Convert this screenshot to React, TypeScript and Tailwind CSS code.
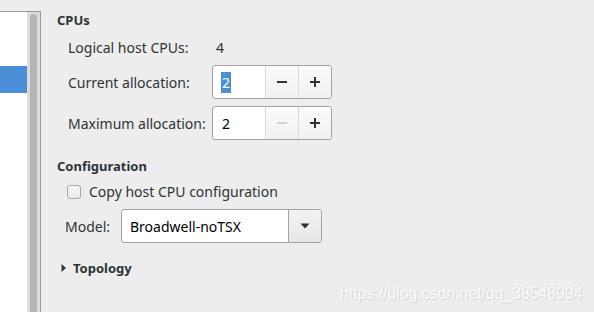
import React from 'react';

const font = { fontFamily: '"Noto Sans", "DejaVu Sans", sans-serif' };

const Minus: React.FC<{ disabled?: boolean }> = ({ disabled }) => (
  <svg width="12" height="12" viewBox="0 0 12 12">
    <rect x="1" y="5" width="10" height="2" fill={disabled ? '#d3d3d3' : '#2e3436'} />
  </svg>
);

const Plus: React.FC = () => (
  <svg width="12" height="12" viewBox="0 0 12 12">
    <rect x="1" y="5" width="10" height="2" fill="#2e3436" />
    <rect x="5" y="1" width="2" height="10" fill="#2e3436" />
  </svg>
);

const SpinBox: React.FC<{ value: string; selected?: boolean; minDisabled?: boolean }> = ({
  value,
  selected,
  minDisabled,
}) => (
  <div className="flex w-[120px] h-[34px] rounded-[3px] border border-[#a3a3a3] bg-white overflow-hidden">
    <div className="w-[52px] flex items-center pl-[8px] text-[14px] text-black">
      {selected ? (
        <span className="bg-[#4a90d9] text-white leading-[21px] px-[1px]">{value}</span>
      ) : (
        <span className="px-[1px]">{value}</span>
      )}
    </div>
    <div className="w-[33px] flex items-center justify-center border-l border-[#d8d8d8] bg-gradient-to-b from-[#fbfbfb] to-[#f1f1f1]">
      <Minus disabled={minDisabled} />
    </div>
    <div className="flex-1 flex items-center justify-center border-l border-[#d8d8d8] bg-gradient-to-b from-[#fbfbfb] to-[#f1f1f1]">
      <Plus />
    </div>
  </div>
);

export default function App() {
  return (
    <div className="relative w-[594px] h-[312px] bg-[#ededed] flex overflow-hidden text-[#2e3436]" style={font}>
      {/* left list + scrollbar */}
      <div className="w-[41px] pt-[11px] flex flex-col">
        <div className="flex-1 flex border-t border-r border-[#9b9b9b] bg-white">
          <div className="w-[27px] pt-[54px]">
            <div className="h-[27px] bg-[#4a90d9]" />
          </div>
          <div className="w-[13px] bg-[#dcdcdc] flex px-[3px] pt-[2px]">
            <div className="flex-1 bg-[#b4b4b4] rounded-t-[4px]" />
          </div>
        </div>
      </div>

      {/* settings */}
      <div className="flex-1 pl-[16px] pt-[12px] flex flex-col text-[14px]">
        <div className="font-bold text-[13px] leading-[16px]">CPUs</div>

        <div className="pl-[11px] flex flex-col">
          <div className="mt-[12px] flex items-center leading-[16px]">
            <span className="w-[148px]">Logical host CPUs:</span>
            <span>4</span>
          </div>
          <div className="mt-[9px] flex items-center">
            <span className="w-[144px]">Current allocation:</span>
            <SpinBox value="2" selected />
          </div>
          <div className="mt-[7px] flex items-center">
            <span className="w-[144px]">Maximum allocation:</span>
            <SpinBox value="2" minDisabled />
          </div>
        </div>

        <div className="mt-[18px] font-bold text-[13px] leading-[16px]">Configuration</div>

        <div className="mt-[10px] pl-[10px] flex items-center leading-[16px]">
          <div className="w-[14px] h-[14px] rounded-[3px] border border-[#a8a8a8] bg-gradient-to-b from-[#f8f8f8] to-[#e9e9e9]" />
          <span className="ml-[8px]">Copy host CPU configuration</span>
        </div>

        <div className="mt-[9px] pl-[8px] flex items-center">
          <span className="w-[56px]">Model:</span>
          <div className="flex w-[201px] h-[34px] rounded-[3px] border border-[#a3a3a3] bg-white overflow-hidden">
            <div className="flex-1 flex items-center pl-[8px] text-black">Broadwell-noTSX</div>
            <div className="w-[33px] flex items-center justify-center border-l border-[#a3a3a3] bg-gradient-to-b from-[#f3f3f3] to-[#e6e6e6]">
              <svg width="10" height="6" viewBox="0 0 10 6">
                <polygon points="0.5,0.5 9.5,0.5 5,5.5" fill="#2e3436" />
              </svg>
            </div>
          </div>
        </div>

        <div className="mt-[17px] pl-[4px] flex items-center leading-[16px] font-bold text-[13px]">
          <svg width="6" height="10" viewBox="0 0 6 10" className="mr-[6px]">
            <polygon points="0.5,1 5,5 0.5,9" fill="#2e3436" />
          </svg>
          <span>Topology</span>
        </div>
      </div>

      {/* watermark */}
      <div
        className="absolute left-[340px] top-[282px] text-[15.8px] text-[#fafafa] [text-shadow:1px_1px_1px_#d2d2d2]"
        style={{ fontFamily: '"Liberation Sans", Arial, sans-serif' }}
      >
        https://blog.csdn.net/qq_38548994
      </div>
    </div>
  );
}
